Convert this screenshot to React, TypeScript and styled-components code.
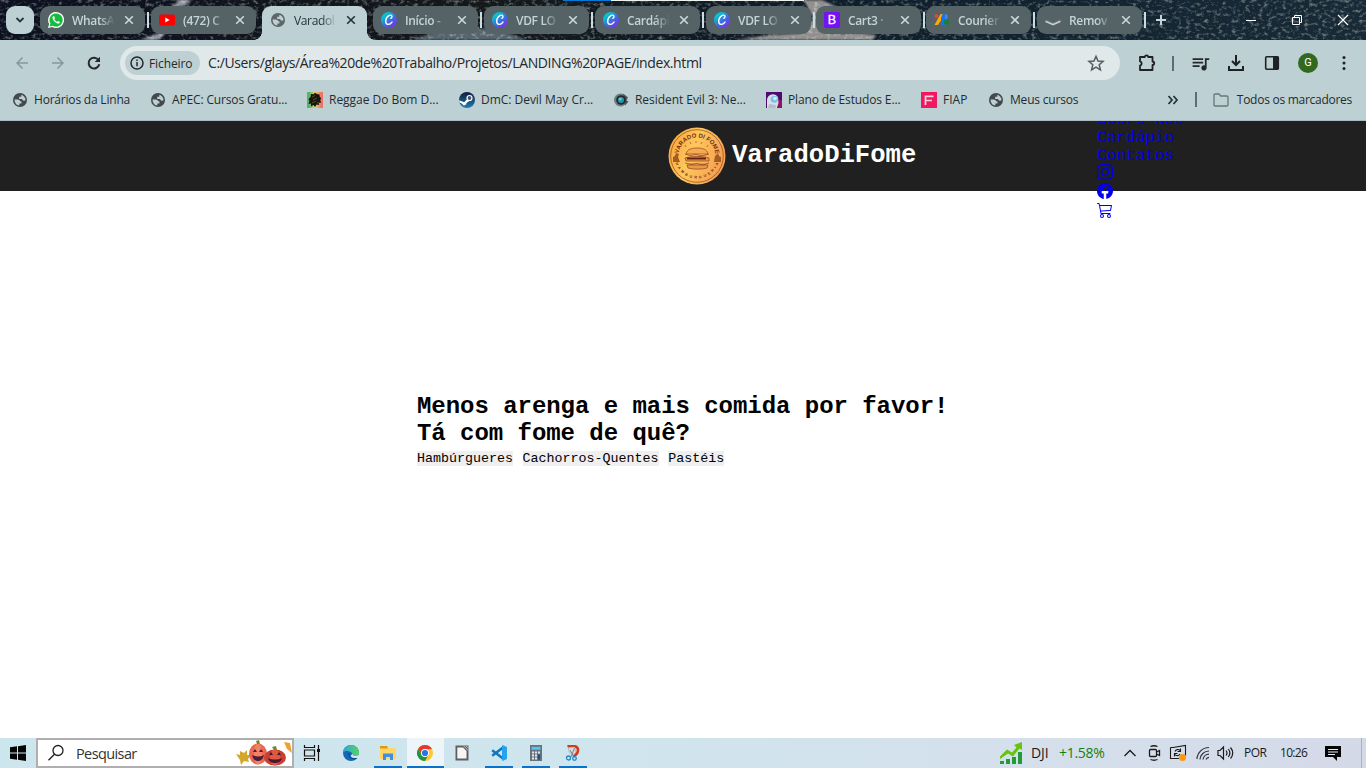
import React from "react";
import styled, { createGlobalStyle, css } from "styled-components";
import { BsInstagram, BsFacebook, BsCart3 } from "react-icons/bs";
import { MdQueueMusic, MdArrowBack, MdArrowForward } from "react-icons/md";

const ui = `"Open Sans", "Noto Sans", sans-serif`;
const mono = `"Courier New", "Liberation Mono", monospace`;

const GlobalStyle = createGlobalStyle`
  * { box-sizing: border-box; }
  body { margin: 0; background: #fff; overflow: hidden; }
`;

const Screen = styled.div`
  width: 1366px;
  height: 768px;
  display: flex;
  flex-direction: column;
  overflow: hidden;
  font-family: ${ui};
`;

/* ---------- tab strip ---------- */

const TabStrip = styled.div`
  position: relative;
  height: 40px;
  flex: none;
  display: flex;
  align-items: flex-start;
  padding: 6px 0 0 6px;
  background: #141c27;
  isolation: isolate;
`;

const Backdrop = styled.svg`
  position: absolute;
  inset: 0;
  z-index: -1;
`;

const Grain = styled.rect`
  mix-blend-mode: screen;
`;

const TabSearch = styled.div`
  width: 28px;
  height: 28px;
  margin-right: 6px;
  border-radius: 9px;
  background: #bdd0d3;
  display: flex;
  align-items: center;
  justify-content: center;
`;

const TabBox = styled.div<{ $active?: boolean }>`
  position: relative;
  width: 105px;
  height: 28px;
  flex: none;
  display: flex;
  align-items: center;
  padding: 0 9px 0 8px;
  border-radius: 9px;
  background: #556266;
  color: #c3d5d9;
  ${(p) =>
    p.$active &&
    css`
      height: 34px;
      padding-bottom: 6px;
      border-radius: 9px 9px 0 0;
      background: #bdd0d3;
      color: #26343a;
      &::before,
      &::after {
        content: "";
        position: absolute;
        bottom: 0;
        width: 8px;
        height: 8px;
      }
      &::before {
        left: -8px;
        background: radial-gradient(circle at 0 0, transparent 7.5px, #bdd0d3 8px);
      }
      &::after {
        right: -8px;
        background: radial-gradient(circle at 100% 0, transparent 7.5px, #bdd0d3 8px);
      }
    `}
`;

const TabTitle = styled.span<{ $active?: boolean }>`
  width: 42px;
  margin-left: 8px;
  overflow: hidden;
  white-space: nowrap;
  font-size: 12px;
  line-height: 20px;
  position: relative;
  top: 1px;
  font-weight: ${(p) => (p.$active ? 500 : 600)};
  letter-spacing: -0.35px;
  mask-image: linear-gradient(90deg, #000 66%, transparent 102%);
`;

const TabClose = styled.svg`
  margin-left: auto;
`;

const TabGap = styled.div<{ $line?: boolean; $w: number }>`
  width: ${(p) => p.$w}px;
  height: 28px;
  flex: none;
  display: flex;
  align-items: center;
  justify-content: center;
  &::after {
    content: "";
    width: 2px;
    height: 16px;
    background: ${(p) => (p.$line ? "#c9dcdf" : "transparent")};
  }
`;

const NewTab = styled.svg`
  margin: 6px 0 0 6px;
`;

const WindowButtons = styled.div`
  margin: 7px 17px 0 auto;
  display: flex;
  gap: 34px;
`;

/* ---------- toolbar ---------- */

const Toolbar = styled.div`
  height: 46px;
  flex: none;
  display: flex;
  align-items: center;
  background: #bdd0d3;
  color: #24292c;
`;

const NavButtons = styled.div`
  width: 120px;
  display: flex;
  gap: 18px;
  padding-left: 13px;
  svg { display: block; }
`;

const AddressBar = styled.div`
  width: 1000px;
  height: 34px;
  display: flex;
  align-items: center;
  border-radius: 17px;
  background: #e0e8ea;
  padding: 0 15px 0 5px;
`;

const SchemeChip = styled.div`
  width: 75px;
  height: 24px;
  display: flex;
  align-items: center;
  gap: 5px;
  padding-left: 5px;
  border-radius: 12px;
  background: #bdd0d3;
  font-size: 12px;
  letter-spacing: -0.1px;
`;

const Url = styled.span`
  margin-left: 8px;
  flex: 1;
  padding-bottom: 1px;
  font-size: 14px;
  letter-spacing: -0.39px;
  white-space: nowrap;
`;

const ToolButtons = styled.div`
  flex: 1;
  display: flex;
  align-items: center;
  padding-left: 18px;
  svg { display: block; }
`;

const ToolSlot = styled.div<{ $w: number }>`
  width: ${(p) => p.$w}px;
  flex: none;
`;

const Divider = styled.i<{ $h: number }>`
  display: block;
  width: 2px;
  height: ${(p) => p.$h}px;
  background: #5f6c70;
`;

const Avatar = styled.div`
  width: 20px;
  height: 20px;
  border-radius: 50%;
  background: #33691e;
  color: #fff;
  font: 11px/20px Roboto, sans-serif;
  text-align: center;
`;

const Bookmarks = styled.div`
  height: 35px;
  flex: none;
  display: flex;
  align-items: center;
  padding: 0 0 7px 12px;
  background: #bdd0d3;
  border-bottom: 1px solid #a9bbc0;
  color: #1f2c32;
  font-size: 12px;
`;

const Bookmark = styled.div<{ $w: number; $ls?: number }>`
  width: ${(p) => p.$w}px;
  flex: none;
  display: flex;
  align-items: center;
  gap: 6px;
  white-space: nowrap;
  letter-spacing: ${(p) => p.$ls ?? -0.2}px;
  svg { flex: none; }
`;

const BookmarksEnd = styled.div`
  margin-left: auto;
  padding-right: 14px;
  display: flex;
  align-items: center;
  letter-spacing: -0.27px;
  svg { margin-right: 16px; }
  svg + span { margin-left: -8px; }
  i { margin-right: 16px; }
`;

/* ---------- web page ---------- */

const Page = styled.div`
  height: 617px;
  flex: none;
  overflow: hidden;
  background: #fff;
  font-family: ${mono};
`;

const Header = styled.header`
  height: 70px;
  display: flex;
  align-items: center;
  padding-left: 668px;
  background: #202020;
`;

const Brand = styled.h1`
  width: 429px;
  margin: 0;
  display: flex;
  align-items: center;
  gap: 6px;
  color: #fff;
  font-size: 25.6px;
  font-weight: 700;
  line-height: 30px;
`;

const Menu = styled.nav`
  display: flex;
  flex-direction: column;
  padding-top: 18px;
  color: #0000ee;
  font-size: 16px;
  line-height: 18px;
  white-space: nowrap;
  span { position: relative; top: 2px; }
  svg { display: block; margin: 0 0 3px; }
  svg:first-of-type { margin-top: 1px; }
`;

const Hero = styled.main`
  padding: 202px 0 0 417px;
  h2 {
    margin: 0;
    font-size: 24px;
    line-height: 27px;
    font-weight: 700;
    letter-spacing: -0.04px;
    color: #000;
  }
`;

const Categories = styled.div`
  display: flex;
  gap: 9.6px;
  margin-top: 4px;
`;

const Category = styled.button`
  border: 0;
  padding: 0 0 1px;
  height: 15px;
  background: #efefef;
  color: #000;
  font: 13.333px/13px ${mono};
`;

/* ---------- taskbar ---------- */

const Taskbar = styled.div`
  height: 30px;
  flex: none;
  display: flex;
  align-items: center;
  background: linear-gradient(90deg, #cde6ee, #d0e5ee 45%, #d5dfeb 80%, #d4d9e8);
  color: #1b1b1b;
`;

const Start = styled.div`
  width: 36px;
  display: flex;
  justify-content: center;
`;

const SearchBox = styled.div`
  width: 258px;
  height: 30px;
  display: flex;
  align-items: center;
  justify-content: space-between;
  padding: 0 0 0 9px;
  border: 2px solid #b0aeaf;
  background: #fff;
  font-size: 14.5px;
  letter-spacing: -0.6px;
  color: #333;
  span { flex: 1; margin-left: 11px; }
`;

const Task = styled.div<{ $open?: boolean; $active?: boolean; $w?: number; $shift?: number }>`
  width: ${(p) => p.$w ?? 37}px;
  height: 30px;
  display: flex;
  align-items: center;
  justify-content: center;
  padding-right: ${(p) => p.$shift ?? 1}px;
  background: ${(p) => (p.$active ? "#edf5f9" : "transparent")};
  position: relative;
  &::after {
    content: "";
    position: absolute;
    bottom: 0;
    left: ${(p) => (p.$active ? 0 : 4)}px;
    right: ${(p) => (p.$active ? 0 : 5)}px;
    height: 2px;
    background: ${(p) => (p.$open || p.$active ? "#0873cf" : "transparent")};
  }
`;

const Tray = styled.div`
  width: 366px;
  height: 30px;
  margin-left: auto;
  display: flex;
  align-items: center;
  svg { flex: none; }
`;

const TrayIcon = styled.svg<{ $gap: number }>`
  margin-left: ${(p) => p.$gap}px;
`;

const TrayText = styled.span<{ $w: number; $size: number; $green?: boolean; $ls?: number; $gap?: number }>`
  width: ${(p) => p.$w}px;
  margin-left: ${(p) => p.$gap ?? 0}px;
  flex: none;
  padding-bottom: 1px;
  white-space: nowrap;
  font-size: ${(p) => p.$size}px;
  letter-spacing: ${(p) => p.$ls ?? -0.4}px;
  color: ${(p) => (p.$green ? "#138013" : "#1b1b1b")};
`;

const ShowDesktop = styled.i`
  width: 5px;
  height: 30px;
  margin-left: auto;
  border-left: 1px solid #aab3c0;
`;

/* ---------- drawings ---------- */

const Globe = ({ c = "#43494c", l = "#bdd0d3" }: { c?: string; l?: string }) => (
  <svg width="16" height="16" viewBox="0 0 16 16">
    <circle cx="8" cy="8" r="7" fill={c} />
    <path d="M2.600 7.400h3c1.500 0 2.500.8 2.500 1.900h1.300v2.200H7.300v1.900C4.600 13.300 2.500 10.800 2.600 7.400zM9.300 2.700c2.400.5 4.200 2.800 4.200 5.300-.6.800-1.500.9-2.400.4-.5-.9-.9-1.500-2.300-1.500H7.200V4.700h2.100z" fill={l} />
  </svg>
);

const WhatsApp = () => (
  <svg width="16" height="16" viewBox="0 0 16 16">
    <path d="M0 16l1.100-4.100A8 8 0 1 1 4.200 15z" fill="#fff" />
    <path d="M1.500 14.500l.9-3.100a6.600 6.600 0 1 1 2.300 2.300z" fill="#16bd3c" />
    <path d="M5.400 4.100c-1 .6-1.200 1.900-.5 3.200 1 2 2.500 3.400 4.500 4.200 1.300.4 2.500-.3 2.500-1.600L10 8.900l-.9 1.100C7.800 9.400 6.900 8.500 6.200 7.300l.8-1-.8-2z" fill="#fff" />
  </svg>
);

const YouTube = () => (
  <svg width="16" height="16" viewBox="0 0 16 16">
    <rect y="2.500" width="16" height="11" rx="2" fill="#f00" />
    <path d="M6.300 5.600v4.800L10.600 8z" fill="#fff" />
  </svg>
);

const Canva = () => (
  <svg width="16" height="16" viewBox="0 0 16 16">
    <defs>
      <linearGradient id="canva" x1="0.1" y1="0.1" x2="0.8" y2="0.95">
        <stop offset="0.15" stopColor="#09c3cf" />
        <stop offset="0.55" stopColor="#3971df" />
        <stop offset="1" stopColor="#7a2ee8" />
      </linearGradient>
    </defs>
    <circle cx="8" cy="8" r="8" fill="url(#canva)" />
    <path d="M9.800 6.300c1.600-.8 1.600-3 .1-3.200C7 2.900 4.700 6.300 4.700 9.300c0 4 4 3.900 6.300.8" fill="none" stroke="#fff" strokeWidth="1.400" strokeLinecap="round" />
  </svg>
);

const BootstrapMark = () => (
  <svg width="16" height="16" viewBox="0 0 16 16">
    <rect width="16" height="16" rx="2" fill="#7610f5" />
    <text x="8" y="12.300" textAnchor="middle" fontFamily="Liberation Sans, sans-serif" fontSize="12.500" fill="#fff" stroke="#fff" strokeWidth="0.300">B</text>
  </svg>
);

const GoogleFonts = () => (
  <svg width="16" height="16" viewBox="0 0 16 16">
    <path d="M6.500 2h2.800v3L4 13H.5z" fill="#f9ab00" />
    <circle cx="2.500" cy="4" r="2" fill="#ea4335" />
    <path d="M8.500 2H11v11H7V6z" fill="#1a73e8" />
    <path d="M11 2a2.700 2.700 0 0 1 0 5.400z" fill="#4285f4" />
    <path d="M11 7.400a2.900 2.900 0 0 1 0 5.600z" fill="#34a853" />
    <circle cx="12.500" cy="10.200" r="2.700" fill="#188038" />
  </svg>
);

const RemoveMark = () => (
  <svg width="16" height="16" viewBox="0 0 16 16">
    <path d="M.5 9.200L8 12.500l7.500-3.300" fill="none" stroke="#c9cdcf" strokeWidth="1.800" />
    <path d="M1 8l7 3 7-3" fill="none" stroke="#777f82" strokeWidth="0.700" />
  </svg>
);

const Lion = () => (
  <svg width="16" height="16" viewBox="0 0 16 16">
    <defs>
      <linearGradient id="rasta"><stop offset="0.150" stopColor="#58b368" /><stop offset="0.500" stopColor="#e6d36a" /><stop offset="0.900" stopColor="#f26f65" /></linearGradient>
    </defs>
    <rect width="16" height="16" fill="url(#rasta)" />
    <path d="M4 2l2.500.3L8 .8l2 1.200 2.500.5.200 2 1.500 2-1 1.500 1 2.500-2.500.5.500 2-2.500-.5L8 15l-1.500-2L4 14.500l0-3L1.500 12l1-3L1.500 7l2-2z" fill="#17170f" />
    <path d="M5 5l3-1.500M6 8l4-2M5 11l4-2M10 11l2-1" stroke="#7d7b32" strokeWidth="0.600" />
  </svg>
);

const Steam = () => (
  <svg width="16" height="16" viewBox="0 0 16 16">
    <defs><linearGradient id="steam" x2="0" y2="1"><stop stopColor="#121a3a" /><stop offset="1" stopColor="#1d7db5" /></linearGradient></defs>
    <circle cx="8" cy="8" r="8" fill="url(#steam)" />
    <circle cx="10.500" cy="6" r="2.500" fill="#405478" stroke="#fff" strokeWidth="1.200" />
    <path d="M.2 8.200l5 2 2.800-3 2 2L7.500 11a2.200 2.200 0 0 1-4.300.8L.6 10.500z" fill="#fff" />
  </svg>
);

const Lens = () => (
  <svg width="16" height="16" viewBox="0 0 16 16">
    <circle cx="7.500" cy="8" r="6.500" fill="#707b7d" />
    <path d="M10 1.500l5 4-2 3 2.500 1-3.500 4z" fill="#4b5456" />
    <circle cx="8" cy="8" r="4.800" fill="#202b30" />
    <circle cx="8" cy="8" r="3.100" fill="#2c8ea1" />
    <circle cx="7.300" cy="7.200" r="1.400" fill="#6fc4d2" />
  </svg>
);

const Astronaut = () => (
  <svg width="16" height="16" viewBox="0 0 16 16">
    <rect width="16" height="16" fill="#4d0b70" />
    <path d="M11 8h5v8h-4z" fill="#8d1468" />
    <path d="M1 16V8a6 6 0 0 1 11-3l.5 6-1.500 5z" fill="#d8dde8" />
    <ellipse cx="8.300" cy="7.300" rx="3.600" ry="3.400" fill="#6fc4e8" />
    <circle cx="9" cy="6.500" r="1.800" fill="#d6f2fb" />
    <path d="M3 12l7 1-.5 3H2z" fill="#b3bccd" />
  </svg>
);

const Fiap = () => (
  <svg width="16" height="16" viewBox="0 0 16 16">
    <rect width="16" height="16" fill="#f01860" />
    <path d="M4.500 13V4.300h8M5 8.500h6" fill="none" stroke="#fbd3df" strokeWidth="1.700" />
  </svg>
);

const Reload = () => (
  <svg width="18" height="18" viewBox="0 0 18 18">
    <path d="M13.600 6.200A5.400 5.400 0 1 0 14.300 10.300" fill="none" stroke="#24292c" strokeWidth="2" />
    <path d="M15 2.700V8H9.700z" fill="#24292c" />
  </svg>
);

const Star = () => (
  <svg width="18" height="18" viewBox="0 0 18 18">
    <path d="M9 2.300l2 4.700 5.100.4-3.900 3.400 1.200 5L9 13.100l-4.400 2.700 1.200-5L1.900 7.400 7 7z" fill="none" stroke="#565e61" strokeWidth="1.500" />
  </svg>
);

const Puzzle = () => (
  <svg width="18" height="18" viewBox="0 0 18 18">
    <path d="M2 3h4.800a1.700 1.700 0 0 1 3.400 0H14.500v4.500a1.700 1.700 0 0 1 0 3.400V16H2v-4.300a2.300 2.300 0 0 0 0-4.400z" fill="none" stroke="#202124" strokeWidth="1.800" strokeLinejoin="round" />
  </svg>
);

const BurgerLogo = () => (
  <svg width="58" height="58" viewBox="0 0 58 58">
    <defs>
      <linearGradient id="badge" x1="0" y1="0.300" x2="1" y2="0.700"><stop stopColor="#f8a83c" /><stop offset="0.400" stopColor="#ffc75c" /><stop offset="1" stopColor="#f49a50" /></linearGradient>
      <path id="arcTop" d="M10.500 29a18.500 18.500 0 0 1 37 0" />
      <path id="arcBottom" d="M6.500 29a22.500 22.500 0 0 0 45 0" />
    </defs>
    <circle cx="29" cy="29" r="28.500" fill="url(#badge)" />
    <circle cx="29" cy="29" r="26.300" fill="none" stroke="#8e4a24" strokeWidth="0.700" />
    <g fill="#702c18" fontFamily="Liberation Sans, sans-serif" fontWeight="700">
      <text fontSize="6" textLength="53"><textPath href="#arcTop" startOffset="2.500">VARADO DI FOME</textPath></text>
      <text fontSize="3.600" textLength="56"><textPath href="#arcBottom" startOffset="7">HAMBURGUERIA</textPath></text>
    </g>
    <path d="M17 18l1 2M22 15l1 2M28 14v2M34 15l-1 2M40 18l-1 2" stroke="#a45d2a" strokeWidth="0.800" />
    <path d="M18 27c1-5 6-6 11-6s10 1 11 6z" fill="#f4ac52" stroke="#9a5228" strokeWidth="0.800" />
    <path d="M17 27l5 1.500 6-1 6 1.500 7-2M17 31c5-2 18-2 24 0v3H18zM17 36l6 1.500 6-1 6 1.500 6-2M19 38h21l-1 3c-5 1.500-14 1.500-19 0z" fill="#ec9a4a" stroke="#87401f" strokeWidth="0.700" />
    <path d="M19 31.500h19" stroke="#6a2115" strokeWidth="2" />
    <path d="M5 35v-5l2-1 1-3 3 1-1 3 2 5zM46 35l1-6 3-3 1 3 2 1v5z" fill="#a55c22" />
  </svg>
);

const Pumpkins = () => (
  <svg width="56" height="26" viewBox="0 0 56 26">
    <path d="M0 14l4 1 0-4 4 2 3-3 0 5 4 0-3 4 1 3-5-1-3 4-1-5z" fill="#d2a72b" />
    <path d="M48 2l6 1 2 10-5-4z" fill="#f2a033" />
    <ellipse cx="22" cy="14" rx="9" ry="10.500" fill="#e9684f" />
    <ellipse cx="22" cy="14" rx="4" ry="10.500" fill="#f28263" />
    <path d="M21 4l-1-3 3-1 1 4z" fill="#6d8a2c" />
    <path d="M17 12l2-3 2 3zM23 12l2-3 2 3zM16 15c4 2 8 2 12 0-1 4-3 6-6 6s-5-2-6-6z" fill="#4b1c3d" />
    <ellipse cx="39" cy="17.500" rx="11" ry="8" fill="#c93f31" />
    <ellipse cx="39" cy="17.500" rx="5" ry="8" fill="#df5941" />
    <path d="M38 10l-2-3 4-1 1 4z" fill="#6d8a2c" />
    <path d="M33 15l2-3 2 3zM41 15l2-3 2 3zM32 18c4 2 10 2 14 0-1 4-4 5-7 5s-6-1-7-5z" fill="#4b1631" />
  </svg>
);

const ChromeMark = () => (
  <svg width="16" height="16" viewBox="0 0 16 16">
    <circle cx="8" cy="8" r="8" fill="#fcc934" />
    <path d="M1.070 4A8 8 0 0 1 14.930 4L8 4.400 4.800 9.800z" fill="#e33b2e" />
    <path d="M1.070 4A8 8 0 0 0 8 16l3.500-6L8 11.600 4.800 9.800z" fill="#229342" />
    <circle cx="8" cy="8" r="4" fill="#fff" />
    <circle cx="8" cy="8" r="3.100" fill="#2a72e5" />
  </svg>
);

const EdgeMark = () => (
  <svg width="16" height="16" viewBox="0 0 16 16">
    <defs><linearGradient id="edge"><stop stopColor="#2aa7dd" /><stop offset="1" stopColor="#5ad35d" /></linearGradient></defs>
    <circle cx="8" cy="8" r="8" fill="#1369b5" />
    <path d="M0 8a8 8 0 0 1 16 0c0 2.500-2 3.500-4 3.500-2.500 0-2.500-1-2-2C9 6 1.500 4.500 0 8z" fill="url(#edge)" />
    <path d="M6 8c-1 3 2 6 6 5.500l2.500-1.500" fill="none" stroke="#0b4b8c" strokeWidth="1.500" />
    <path d="M9.500 8.500c0 2.700 3 3.500 6.500 1.500v2.500c-3 1-7 1-8.500-1.500z" fill="#d1e6ef" />
  </svg>
);

const FolderMark = () => (
  <svg width="16" height="16" viewBox="0 0 16 16">
    <path d="M0 1h7l1.500 2H16v11H0z" fill="#ffd667" />
    <path d="M0 1h7l1 2.500H0z" fill="#dd9b11" />
    <path d="M3 15V8.500h10V15h-3v-3H6v3z" fill="#3e91df" />
  </svg>
);

const DocMark = () => (
  <svg width="16" height="16" viewBox="0 0 16 16">
    <path d="M1.500.5h13v15h-13z" fill="#5f5f5f" />
    <path d="M3.300 2.500h5.700l3.500 3.500v7.500H3.300z" fill="#f5f5f5" />
    <path d="M9.500 .8l4.700 4.700M12 .8l2.500 2.500" stroke="#c5c5c5" fill="none" />
  </svg>
);

const CodeMark = () => (
  <svg width="16" height="16" viewBox="0 0 16 16">
    <path d="M1.200 5.200L12 13.500M1.200 10.800L12 2.500" stroke="#1177bd" strokeWidth="2.600" />
    <path d="M11.500 0L16 2v12l-4.500 2-.5-1V1z" fill="#27a3ee" />
  </svg>
);

const CalcMark = () => (
  <svg width="16" height="16" viewBox="0 0 16 16">
    <rect x="2" width="12" height="16" fill="#67727b" />
    <rect x="3.500" y="1.800" width="9" height="3" fill="#54c5ee" />
    <path d="M4 7.500h2M7 7.500h2M10 7.500h2M4 10.500h2M7 10.500h2M4 13.500h2M7 13.500h2" stroke="#e4e9ec" strokeWidth="2" />
    <path d="M11 9.500v5" stroke="#164f91" strokeWidth="2" />
  </svg>
);

const SnipMark = () => (
  <svg width="16" height="16" viewBox="0 0 16 16">
    <path d="M2.500 1.500c6-2 11 0 10.500 4-.5 4-3 5-5 6" fill="none" stroke="#d43b1c" strokeWidth="2.600" />
    <path d="M3.500 3l6-1 1.500 5-3 3.500-4-3.500z" fill="#d8dbdd" stroke="#999" strokeWidth="0.500" />
    <path d="M9.500 3L6 12M5 5l4 7" stroke="#7b8891" />
    <circle cx="3.500" cy="13" r="2" fill="none" stroke="#2386c8" strokeWidth="1.300" />
    <circle cx="9.500" cy="13.500" r="1.800" fill="none" stroke="#2386c8" strokeWidth="1.300" />
  </svg>
);

const Mountains = () => (
  <Backdrop width="1366" height="40" viewBox="0 0 1366 40">
    <defs>
      <filter id="grain" x="0" y="0" width="100%" height="100%" colorInterpolationFilters="sRGB">
        <feTurbulence type="fractalNoise" baseFrequency="0.22 0.3" numOctaves="3" seed="8" />
        <feColorMatrix values="1.1 0 0 0 -.56  1.1 0 0 0 -.55  1 0 0 0 -.5  0 0 0 0 1" />
      </filter>
      <linearGradient id="night">
        <stop stopColor="#0c1020" /><stop offset="0.350" stopColor="#14181b" /><stop offset="0.600" stopColor="#0f1d2b" /><stop offset="1" stopColor="#192a37" />
      </linearGradient>
      <filter id="soft"><feGaussianBlur stdDeviation="1" /></filter>
    </defs>
    <rect width="1366" height="40" fill="url(#night)" />
    <g filter="url(#soft)">
      <path d="M139 40l18-6h8l-7 6zM170 8l10-8h12l-8 6z" fill="#9397a4" />
      <path d="M412 40l26-9c30-6 60-4 88 9z" fill="#56656d" />
      <path d="M804 0h18l15 7-5 27 28-1 16 2-3 5H735l35-5 34-2 9-15z" fill="#92908e" />
    </g>
    <Grain width="1366" height="40" filter="url(#grain)" />
    <rect x="563" width="48" height="1" fill="#0878d8" />
    <rect x="611" width="193" height="1" fill="#eef2ee" />
  </Backdrop>
);

const tabs: { title: string; icon: React.ReactNode; active?: boolean }[] = [
  { title: "WhatsA", icon: <WhatsApp /> },
  { title: "(472) C", icon: <YouTube /> },
  { title: "Varadol", icon: <Globe c="#5f6569" />, active: true },
  { title: "Início -", icon: <Canva /> },
  { title: "VDF LO", icon: <Canva /> },
  { title: "Cardápi", icon: <Canva /> },
  { title: "VDF LO", icon: <Canva /> },
  { title: "Cart3 ·", icon: <BootstrapMark /> },
  { title: "Courier", icon: <GoogleFonts /> },
  { title: "Remov", icon: <RemoveMark /> },
];

const bookmarks: { label: string; icon: React.ReactNode; w: number; ls?: number }[] = [
  { label: "Horários da Linha", icon: <Globe />, w: 138 },
  { label: "APEC: Cursos Gratu...", icon: <Globe />, w: 157, ls: -0.15 },
  { label: "Reggae Do Bom D...", icon: <Lion />, w: 152, ls: -0.03 },
  { label: "DmC: Devil May Cr...", icon: <Steam />, w: 154, ls: -0.03 },
  { label: "Resident Evil 3: Ne...", icon: <Lens />, w: 153, ls: -0.05 },
  { label: "Plano de Estudos E...", icon: <Astronaut />, w: 155, ls: -0.14 },
  { label: "FIAP", icon: <Fiap />, w: 67, ls: 0 },
  { label: "Meus cursos", icon: <Globe />, w: 110 },
];

export default function App() {
  return (
    <Screen>
      <GlobalStyle />
      <TabStrip>
        <Mountains />
        <TabSearch>
          <svg width="10" height="10" viewBox="0 0 10 10"><path d="M1.500 3L5 6.500 8.500 3" fill="none" stroke="#25363b" strokeWidth="1.800" /></svg>
        </TabSearch>
        {tabs.map((t, i) => (
          <React.Fragment key={i}>
            <TabBox $active={t.active}>
              {t.icon}
              <TabTitle $active={t.active}>{t.title}</TabTitle>
              <TabClose width="14" height="14" viewBox="0 0 14 14">
                <path d="M3.200 3.200l7.600 7.600M10.800 3.200l-7.600 7.600" stroke={t.active ? "#22343a" : "#c8d9dc"} strokeWidth="1.600" />
              </TabClose>
            </TabBox>
            <TabGap $line={i !== 1 && i !== 2} $w={i === 6 || i === 7 ? 5 : 6} />
          </React.Fragment>
        ))}
        <NewTab width="14" height="16" viewBox="0 0 14 16"><path d="M7 3v10M2 8h10" stroke="#c3d5d9" strokeWidth="2" /></NewTab>
        <WindowButtons>
          <svg width="12" height="14" viewBox="0 0 12 14"><path d="M1 7.500h10" stroke="#fff" /></svg>
          <svg width="12" height="14" viewBox="0 0 12 14"><path d="M1.500 4.500h7v7h-7zM3.500 4.500v-2h7v7h-2" fill="none" stroke="#fff" /></svg>
          <svg width="12" height="14" viewBox="0 0 12 14"><path d="M1 2l10 10M11 2L1 12" stroke="#fff" strokeWidth="1.200" /></svg>
        </WindowButtons>
      </TabStrip>

      <Toolbar>
        <NavButtons>
          <MdArrowBack size={18} color="#87989c" />
          <MdArrowForward size={18} color="#87989c" />
          <Reload />
        </NavButtons>
        <AddressBar>
          <SchemeChip>
            <svg width="14" height="14" viewBox="0 0 14 14"><circle cx="7" cy="7" r="6" fill="none" stroke="#24292c" strokeWidth="1.500" /><path d="M7 6v4.200M7 3.500v1.500" stroke="#24292c" strokeWidth="1.500" /></svg>
            Ficheiro
          </SchemeChip>
          <Url>C:/Users/glays/Área%20de%20Trabalho/Projetos/LANDING%20PAGE/index.html</Url>
          <Star />
        </AddressBar>
        <ToolButtons>
          <ToolSlot $w={34}><Puzzle /></ToolSlot>
          <ToolSlot $w={18}><Divider $h={15} /></ToolSlot>
          <ToolSlot $w={37}><MdQueueMusic size={21} /></ToolSlot>
          <ToolSlot $w={37}>
            <svg width="18" height="18" viewBox="0 0 18 18"><path d="M9 1v9M5 7l4 4 4-4M2 12v4h14v-4" fill="none" stroke="#202124" strokeWidth="2" /></svg>
          </ToolSlot>
          <ToolSlot $w={34}>
            <svg width="16" height="16" viewBox="0 0 16 16"><rect x="1.700" y="1.700" width="12.600" height="12.600" rx="1" fill="none" stroke="#202124" strokeWidth="1.600" /><path d="M9 1.500h5.500v13H9z" fill="#202124" /></svg>
          </ToolSlot>
          <ToolSlot $w={37}><Avatar>G</Avatar></ToolSlot>
          <svg width="18" height="18" viewBox="0 0 18 18" fill="#202124"><circle cx="9" cy="3.500" r="1.500" /><circle cx="9" cy="9" r="1.500" /><circle cx="9" cy="14.500" r="1.500" /></svg>
        </ToolButtons>
      </Toolbar>

      <Bookmarks>
        {bookmarks.map((b) => (
          <Bookmark key={b.label} $w={b.w} $ls={b.ls}>{b.icon}{b.label}</Bookmark>
        ))}
        <BookmarksEnd>
          <svg width="12" height="12" viewBox="0 0 12 12"><path d="M1.500 2L5 6 1.500 10M6.500 2L10 6 6.500 10" fill="none" stroke="#25363b" strokeWidth="1.800" /></svg>
          <Divider $h={15} />
          <svg width="16" height="14" viewBox="0 0 16 14"><path d="M1 12V2.200Q1 1 2.200 1H6l1.800 2h6q1.200 0 1.200 1.200V12q0 1-1.200 1H2.200Q1 13 1 12z" fill="none" stroke="#6a767a" strokeWidth="1.300" /></svg>
          <span>Todos os marcadores</span>
        </BookmarksEnd>
      </Bookmarks>

      <Page>
        <Header>
          <Brand><BurgerLogo /><span>VaradoDiFome</span></Brand>
          <Menu>
            <span>Sobre Nós</span>
            <span>Cardápio</span>
            <span>Contatos</span>
            <BsInstagram size={16} />
            <BsFacebook size={16} />
            <BsCart3 size={16} />
          </Menu>
        </Header>
        <Hero>
          <h2>Menos arenga e mais comida por favor!</h2>
          <h2>Tá com fome de quê?</h2>
          <Categories>
            <Category>Hambúrgueres</Category>
            <Category>Cachorros-Quentes</Category>
            <Category>Pastéis</Category>
          </Categories>
        </Hero>
      </Page>

      <Taskbar>
        <Start>
          <svg width="16" height="16" viewBox="0 0 16 16"><path d="M0 2.300l7-1v6.200H0zM8 1.200L16 0v7.500H8zM0 8.500h7v6.200l-7-1zM8 8.500h8V16l-8-1.200z" fill="#050505" /></svg>
        </Start>
        <SearchBox>
          <svg width="18" height="18" viewBox="0 0 18 18"><circle cx="11" cy="6.500" r="5" fill="none" stroke="#222" strokeWidth="1.300" /><path d="M7.500 10.200L1.500 16.200" stroke="#222" strokeWidth="1.400" /></svg>
          <span>Pesquisar</span>
          <Pumpkins />
        </SearchBox>
        <Task>
          <svg width="18" height="16" viewBox="0 0 18 16"><path d="M1.500 0v2.500h10V0M1.500 16v-2.500h10V16M1.500 5h10v6h-10zM15.500 0v16" fill="none" stroke="#111" strokeWidth="1.200" /><path d="M14 4h3v3h-3z" fill="#111" /></svg>
        </Task>
        <Task $w={39} $shift={0}><EdgeMark /></Task>
        <Task $open><FolderMark /></Task>
        <Task $active><ChromeMark /></Task>
        <Task><DocMark /></Task>
        <Task $open><CodeMark /></Task>
        <Task $open><CalcMark /></Task>
        <Task $open><SnipMark /></Task>
        <Tray>
          <svg width="22" height="22" viewBox="0 0 22 22"><path d="M0 14.500L7 7.500l5 3 4.500-5L14 3l8-3v8l-2.500-1.500-6.500 8-5-3-8 5.500z" fill="#66c40d" /><path d="M0 19h4v3H0zM6 17h4v5H6zM12 15h4v7h-4zM18 10h4v12h-4z" fill="#239b37" /></svg>
          <TrayText $w={28} $size={14} $gap={9} $ls={-0.1}>DJI</TrayText>
          <TrayText $w={64} $size={14} $green $ls={-0.3}>+1.58%</TrayText>
          <svg width="14" height="10" viewBox="0 0 14 10"><path d="M1.500 8L7 2.500 12.500 8" fill="none" stroke="#1b1b1b" strokeWidth="1.300" /></svg>
          <TrayIcon $gap={11} width="14" height="18" viewBox="0 0 14 18"><path d="M2.500 5.500h5q1 0 1 1v5q0 1-1 1h-5q-1 0-1-1v-5q0-1 1-1zM8.500 8l3-1.500v5L8.500 10M2.500 2.500q3.500-1.500 7 0M2.500 15.500q3.500 1.500 7 0" fill="none" stroke="#1b1b1b" strokeWidth="1.300" /></TrayIcon>
          <TrayIcon $gap={7} width="18" height="18" viewBox="0 0 18 18"><path d="M4 3.500L16.500 1.500v10M1.500 3.500v11H10M4 3.500H1.500M6 7.500a3 3 0 0 1 5-1l.5 1M11.500 4.500v3h-3M11 10a3 3 0 0 1-5 .5L5.500 9.500M5.500 12.500v-3h3" fill="none" stroke="#1b1b1b" strokeWidth="1.100" /><circle cx="13.500" cy="13.500" r="3.500" fill="#ff9811" /></TrayIcon>
          <TrayIcon $gap={9} width="14" height="16" viewBox="0 0 14 16"><path d="M1 14A12 12 0 0 1 13 2.500M4 14.500A9 9 0 0 1 13 6M7 14.500A6 6 0 0 1 13 9.200M10 14.500A3.500 3.500 0 0 1 13 12.300" fill="none" stroke="#30343a" strokeWidth="1.200" /></TrayIcon>
          <TrayIcon $gap={7} width="18" height="16" viewBox="0 0 18 16"><path d="M1 5.500h2L6.500 2v12L3 10.500H1zM9 5.500q2 2.500 0 5M11.300 4q3.200 4 0 8M13.500 2.500q4.500 5.500 0 11" fill="none" stroke="#1b1b1b" strokeWidth="1.200" /></TrayIcon>
          <TrayText $w={36} $size={12} $ls={-0.5} $gap={9}>POR</TrayText>
          <TrayText $w={44} $size={12} $ls={-0.7}>10:26</TrayText>
          <svg width="18" height="18" viewBox="0 0 18 18"><path d="M1 2h16v11h-4v4l-4-4H1z" fill="#050505" /><path d="M4 5.500h10M4 8h10M4 10.500h7" stroke="#e8ecf2" /></svg>
          <ShowDesktop />
        </Tray>
      </Taskbar>
    </Screen>
  );
}
